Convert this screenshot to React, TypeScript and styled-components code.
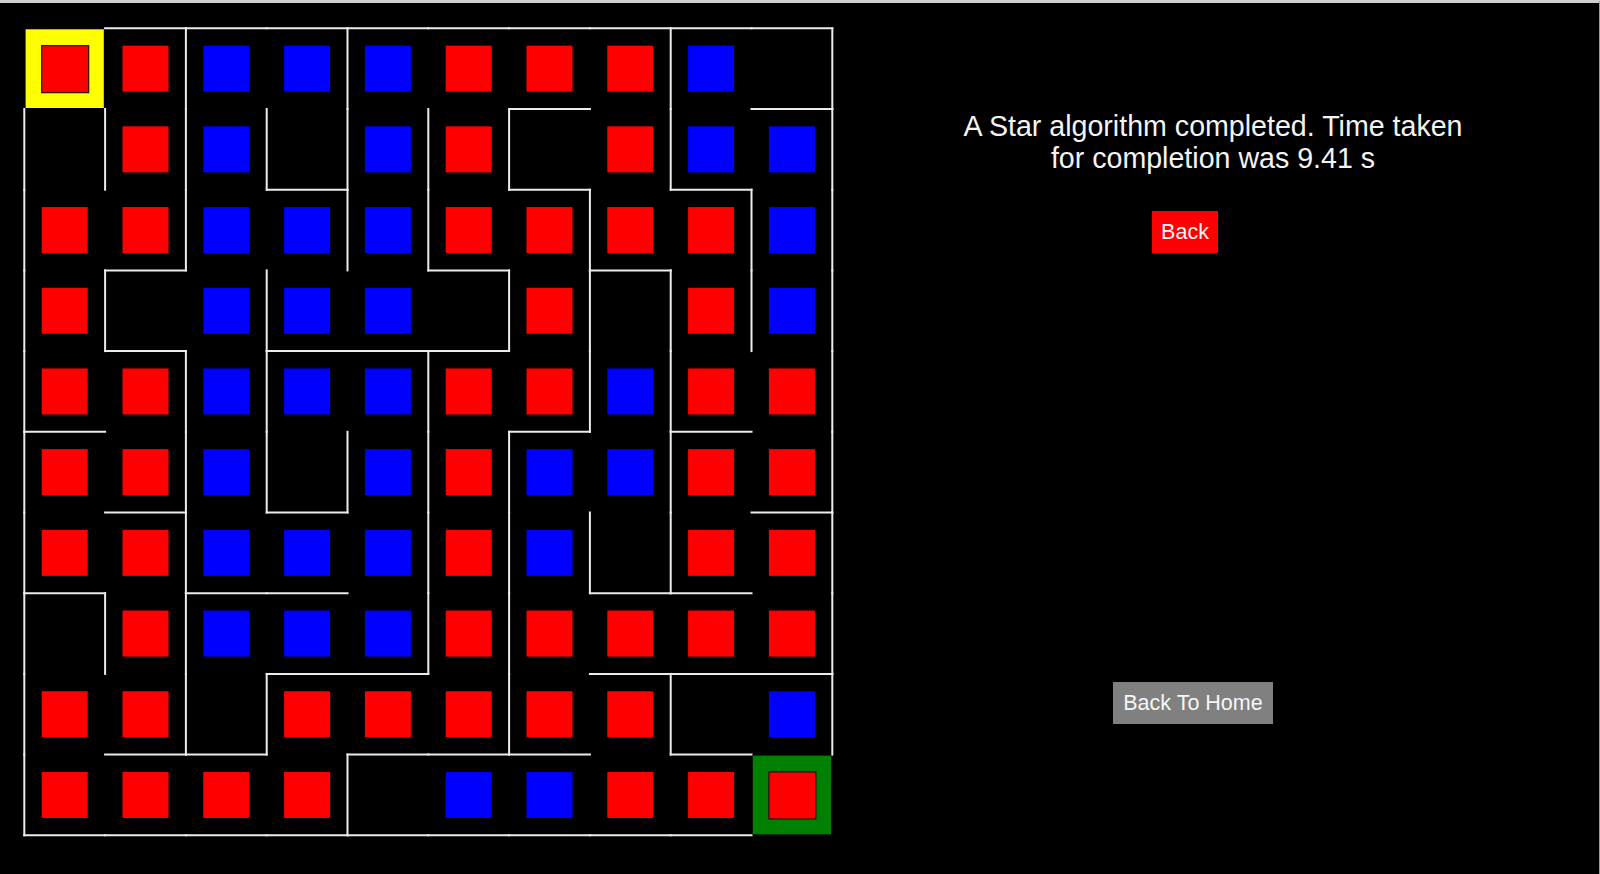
import React from "react";
import styled, { createGlobalStyle } from "styled-components";

const GlobalStyle = createGlobalStyle`
  html, body {
    margin: 0;
    padding: 0;
    background: #000;
  }
  body {
    font-family: "Liberation Sans", Arial, sans-serif;
    overflow: hidden;
  }
`;

const Page = styled.div`
  width: 1600px;
  height: 874px;
  box-sizing: border-box;
  background: #000;
  border-top: 3px solid #cfcfcf;
  border-right: 1px solid #9c9c9c;
  display: flex;
  align-items: flex-start;
  padding: 17px 0 0 16px;
`;

const MazeCanvas = styled.svg`
  display: block;
  flex: 0 0 auto;
  width: 830px;
  height: 830px;
`;

const InfoPanel = styled.section`
  flex: 1 1 auto;
  display: flex;
  flex-direction: column;
  align-items: center;
  padding: 90px 19px 0 0;
`;

const Message = styled.p`
  margin: 0;
  color: #f4f4f4;
  font-size: 28.6px;
  line-height: 32px;
  text-align: center;
`;

const ActionButton = styled.button<{ $tone: "red" | "gray"; $shift: number; $gap: number; $padX: number }>`
  appearance: none;
  border: none;
  margin: ${(p) => p.$gap}px ${(p) => p.$shift}px 0 0;
  padding: 9px ${(p) => p.$padX}px;
  background: ${(p) => (p.$tone === "red" ? "#ff0000" : "#808080")};
  color: #f6f6f6;
  font-family: "Liberation Sans", Arial, sans-serif;
  font-size: 21.5px;
  line-height: 24px;
  cursor: pointer;
`;

const OX = 8.3;
const OY = 8.3;
const CW = 80.8;
const CH = 80.7;
const SQ = 46;
const WALL = "#ececec";

type Cell = "R" | "B" | "_" | "S" | "G";

const GRID: Cell[][] = [
  ["S", "R", "B", "B", "B", "R", "R", "R", "B", "_"],
  ["_", "R", "B", "_", "B", "R", "_", "R", "B", "B"],
  ["R", "R", "B", "B", "B", "R", "R", "R", "R", "B"],
  ["R", "_", "B", "B", "B", "_", "R", "_", "R", "B"],
  ["R", "R", "B", "B", "B", "R", "R", "B", "R", "R"],
  ["R", "R", "B", "_", "B", "R", "B", "B", "R", "R"],
  ["R", "R", "B", "B", "B", "R", "B", "_", "R", "R"],
  ["_", "R", "B", "B", "B", "R", "R", "R", "R", "R"],
  ["R", "R", "_", "R", "R", "R", "R", "R", "_", "B"],
  ["R", "R", "R", "R", "_", "B", "B", "R", "R", "G"],
];

// horizontal walls: line index j -> columns
const H_WALLS: number[][] = [
  [1, 2, 3, 4, 5, 6, 7, 8, 9],
  [6, 9],
  [3, 6, 8],
  [1, 5, 7],
  [1, 3, 4, 5],
  [0, 6, 8],
  [1, 3, 9],
  [0, 2, 3, 7, 8],
  [3, 4, 7, 8, 9],
  [1, 2, 4, 5, 6, 8],
  [0, 1, 2, 3, 4, 5, 6, 7, 8],
];

// vertical walls: line index i -> rows
const V_WALLS: number[][] = [
  [1, 2, 3, 4, 5, 6, 7, 8, 9],
  [1, 3, 7],
  [0, 1, 2, 4, 5, 6, 7, 8],
  [1, 3, 4, 5, 8],
  [0, 1, 2, 5, 9],
  [1, 2, 4, 5, 6, 7],
  [1, 3, 5, 6, 7, 8],
  [2, 3, 4, 6],
  [0, 1, 3, 4, 5, 6, 8],
  [2, 3],
  [0, 1, 2, 3, 4, 5, 6, 7, 8],
];

const cx = (c: number) => OX + c * CW;
const cy = (r: number) => OY + r * CH;

function Square({ r, c, fill }: { r: number; c: number; fill: string }) {
  return (
    <rect
      x={cx(c) + (CW - SQ) / 2}
      y={cy(r) + (CH - SQ) / 2}
      width={SQ}
      height={SQ}
      fill={fill}
    />
  );
}

function Endpoint({ r, c, ring }: { r: number; c: number; ring: string }) {
  const inner = 47;
  return (
    <g>
      <rect x={cx(c) + 1.3} y={cy(r) + 1} width={CW - 2.6} height={CH - 2} fill={ring} />
      <rect
        x={cx(c) + (CW - inner) / 2 + 0.5}
        y={cy(r) + (CH - inner) / 2 + 0.5}
        width={inner}
        height={inner}
        fill="#ff0000"
        stroke="#2a0a0a"
        strokeWidth={1.2}
      />
    </g>
  );
}

function Maze() {
  return (
    <MazeCanvas viewBox="0 0 830 830" aria-label="Maze">
      {GRID.map((row, r) =>
        row.map((cell, c) => {
          const key = `${r}-${c}`;
          if (cell === "R") return <Square key={key} r={r} c={c} fill="#ff0000" />;
          if (cell === "B") return <Square key={key} r={r} c={c} fill="#0000ff" />;
          if (cell === "S") return <Endpoint key={key} r={r} c={c} ring="#ffff00" />;
          if (cell === "G") return <Endpoint key={key} r={r} c={c} ring="#008000" />;
          return null;
        })
      )}
      <g stroke={WALL} strokeWidth={2} strokeLinecap="square">
        {H_WALLS.map((cols, j) =>
          cols.map((i) => (
            <line key={`h${j}-${i}`} x1={cx(i)} y1={cy(j)} x2={cx(i + 1)} y2={cy(j)} />
          ))
        )}
        {V_WALLS.map((rows, i) =>
          rows.map((j) => (
            <line key={`v${i}-${j}`} x1={cx(i)} y1={cy(j)} x2={cx(i)} y2={cy(j + 1)} />
          ))
        )}
      </g>
    </MazeCanvas>
  );
}

export default function App() {
  return (
    <>
      <GlobalStyle />
      <Page>
        <Maze />
        <InfoPanel>
          <Message>
            A Star algorithm completed. Time taken
            <br />
            for completion was 9.41 s
          </Message>
          <ActionButton $tone="red" $shift={56} $gap={37} $padX={9.5}>
            Back
          </ActionButton>
          <ActionButton $tone="gray" $shift={40} $gap={429} $padX={10}>
            Back To Home
          </ActionButton>
        </InfoPanel>
      </Page>
    </>
  );
}
